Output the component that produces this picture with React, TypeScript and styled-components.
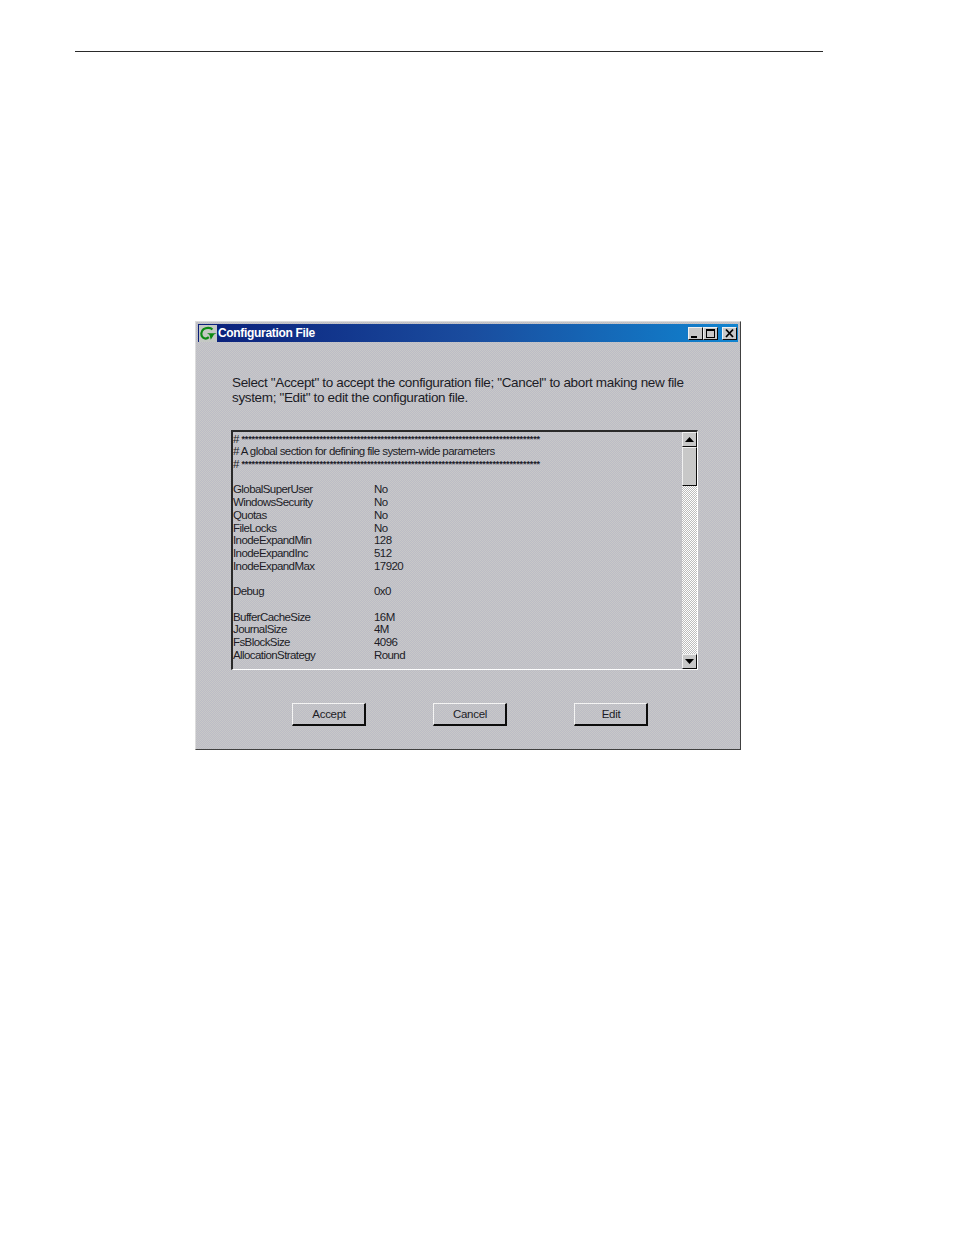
import React from 'react';
import styled, { createGlobalStyle } from 'styled-components';

const Colors = {
    face: '#c8c8c8',
    dither: '#bcbcc6',
    dark: '#0c0c0c',
    ink: '#1c1c26',
    rule: '#2a2a2a',
};

const GlobalStyle = createGlobalStyle`
    html, body {
        margin: 0;
        padding: 0;
        background: #fff;
    }
    body {
        font-family: "Liberation Sans", Arial, sans-serif;
    }
`;

const Page = styled.div`
    width: 954px;
    height: 1235px;
    padding-top: 51px;
    box-sizing: border-box;
    overflow: hidden;
`;

const HeaderRule = styled.div`
    width: 748px;
    height: 1px;
    margin-left: 75px;
    background: ${Colors.rule};
`;

const Window = styled.div`
    width: 546px;
    height: 429px;
    margin: 269px 0 0 195px;
    box-sizing: border-box;
    padding: 2px;
    display: flex;
    flex-direction: column;
    border: 1px solid;
    border-color: #dcdcdc #404040 #404040 #dcdcdc;
    background-color: ${Colors.face};
    background-image: conic-gradient(${Colors.dither} 25%, transparent 0 50%, ${Colors.dither} 0 75%, transparent 0);
    background-size: 2px 2px;
`;

const TitleBar = styled.div`
    height: 18px;
    flex: none;
    display: flex;
    align-items: center;
    padding-left: 1px;
    background: linear-gradient(90deg, #0a1f7a 0%, #1a4c9e 50%, #1084d0 100%);
`;

const AppIcon = styled.svg`
    width: 18px;
    height: 17px;
    flex: none;
`;

const Title = styled.div`
    flex: 1;
    margin-left: 1px;
    color: #fff;
    font-size: 12px;
    font-weight: 700;
    letter-spacing: -0.32px;
`;

const CaptionButton = styled.div<{ $gap?: number }>`
    width: 15px;
    height: 13px;
    box-sizing: border-box;
    margin-left: ${p => p.$gap ?? 0}px;
    border: 1px solid;
    border-color: #f0f0f0 ${Colors.dark} ${Colors.dark} #f0f0f0;
    background: ${Colors.face};
    display: flex;
    align-items: center;
    justify-content: center;
    svg {
        display: block;
    }
`;

const CaptionGroup = styled.div`
    display: flex;
    margin-right: 1px;
`;

const Body = styled.div`
    flex: 1;
    display: flex;
    flex-direction: column;
    padding: 33px 40px 0 34px;
`;

const Prompt = styled.p`
    margin: 0;
    width: 470px;
    color: ${Colors.ink};
    font-size: 13.5px;
    line-height: 15px;
    letter-spacing: -0.35px;
`;

const ListBox = styled.div`
    width: 467px;
    height: 240px;
    margin: 25px 0 0 -1px;
    box-sizing: border-box;
    display: flex;
    border-style: solid;
    border-width: 2px 1px 1px 2px;
    border-color: ${Colors.rule} #fff #fff ${Colors.rule};
`;

const ListText = styled.div`
    flex: 1;
    min-width: 0;
    padding-top: 0.6px;
    overflow: hidden;
    color: ${Colors.ink};
    font-size: 11.5px;
    letter-spacing: -0.58px;
`;

const Line = styled.div`
    display: flex;
    height: 12.72px;
    line-height: 12.72px;
    white-space: pre;
`;

const Key = styled.span`
    width: 141px;
    flex: none;
`;

const Stars = styled.span`
    color: #20202a;
    font-size: 9px;
    font-weight: 700;
    letter-spacing: -0.11px;
`;

const ScrollBar = styled.div`
    width: 15px;
    flex: none;
    display: flex;
    flex-direction: column;
`;

const ScrollButton = styled.div`
    width: 15px;
    height: 15px;
    flex: none;
    box-sizing: border-box;
    border: 1px solid;
    border-color: #f0f0f0 ${Colors.dark} ${Colors.dark} #f0f0f0;
    background: ${Colors.face};
    display: flex;
    align-items: center;
    justify-content: center;
`;

const Thumb = styled.div`
    height: 39px;
    flex: none;
    box-sizing: border-box;
    border: 1px solid;
    border-color: #f0f0f0 ${Colors.dark} ${Colors.dark} #f0f0f0;
    background: ${Colors.face};
`;

const Track = styled.div`
    flex: 1;
    background-color: #fff;
    background-image: conic-gradient(#bcbcbc 25%, transparent 0 50%, #bcbcbc 0 75%, transparent 0);
    background-size: 2px 2px;
`;

const ButtonRow = styled.div`
    display: flex;
    gap: 67px;
    margin: 33px 0 0 60px;
`;

const PushButton = styled.div`
    width: 74px;
    height: 23px;
    box-sizing: border-box;
    padding-left: 1px;
    border: 1px solid;
    border-width: 1px 2px 2px 1px;
    border-color: #f4f4f4 ${Colors.dark} ${Colors.dark} #f4f4f4;
    display: flex;
    align-items: center;
    justify-content: center;
    color: ${Colors.ink};
    font-size: 11.5px;
    letter-spacing: -0.3px;
`;

const settings: [string, string][] = [
    ['GlobalSuperUser', 'No'],
    ['WindowsSecurity', 'No'],
    ['Quotas', 'No'],
    ['FileLocks', 'No'],
    ['InodeExpandMin', '128'],
    ['InodeExpandInc', '512'],
    ['InodeExpandMax', '17920'],
    ['', ''],
    ['Debug', '0x0'],
    ['', ''],
    ['BufferCacheSize', '16M'],
    ['JournalSize', '4M'],
    ['FsBlockSize', '4096'],
    ['AllocationStrategy', 'Round'],
];

const STARS = '*'.repeat(88);

const App = (): JSX.Element => (
    <Page>
        <GlobalStyle />
        <HeaderRule />
        <Window>
            <TitleBar>
                <AppIcon viewBox="0 0 18 17">
                    <rect width="18" height="17" fill="#c4c8c4" />
                    <path d="M13.4 4.4C11.6 2.4 7.4 2.2 4.6 4.2 1.8 6.4 1.6 10.6 3.8 12.4c1.8 1.4 4.4 1.2 6-.2" fill="none" stroke="#0c8a14" strokeWidth="2.2" />
                    <path d="M8 8.2h9.6l-2.6 1.4-3.2 5.2-1.4-5z" fill="#0c8a14" />
                </AppIcon>
                <Title>Configuration File</Title>
                <CaptionGroup>
                    <CaptionButton>
                        <svg width="13" height="11" viewBox="0 0 13 11">
                            <rect x="2" y="8" width="6" height="2" fill="#000" />
                        </svg>
                    </CaptionButton>
                    <CaptionButton>
                        <svg width="13" height="11" viewBox="0 0 13 11">
                            <path d="M2 1h9v9H2zM3 3v6h7V3z" fill="#000" fillRule="evenodd" />
                        </svg>
                    </CaptionButton>
                    <CaptionButton $gap={4}>
                        <svg width="13" height="11" viewBox="0 0 13 11">
                            <path d="M3 1.5l7 7.5M10 1.5L3 9" stroke="#000" strokeWidth="1.8" fill="none" />
                        </svg>
                    </CaptionButton>
                </CaptionGroup>
            </TitleBar>
            <Body>
                <Prompt>
                    Select "Accept" to accept the configuration file; "Cancel" to abort making new file
                    <br />
                    system; "Edit" to edit the configuration file.
                </Prompt>
                <ListBox>
                    <ListText>
                        <Line># <Stars>{STARS}</Stars></Line>
                        <Line># A global section for defining file system-wide parameters</Line>
                        <Line># <Stars>{STARS}</Stars></Line>
                        <Line> </Line>
                        {settings.map(([key, value], i) => (
                            <Line key={i}>
                                <Key>{key}</Key>
                                <span>{value}</span>
                            </Line>
                        ))}
                    </ListText>
                    <ScrollBar>
                        <ScrollButton>
                            <svg width="9" height="5" viewBox="0 0 9 5">
                                <path d="M4.5 0L9 5H0z" fill="#000" />
                            </svg>
                        </ScrollButton>
                        <Thumb />
                        <Track />
                        <ScrollButton>
                            <svg width="9" height="5" viewBox="0 0 9 5">
                                <path d="M0 0h9L4.5 5z" fill="#000" />
                            </svg>
                        </ScrollButton>
                    </ScrollBar>
                </ListBox>
                <ButtonRow>
                    <PushButton>Accept</PushButton>
                    <PushButton>Cancel</PushButton>
                    <PushButton>Edit</PushButton>
                </ButtonRow>
            </Body>
        </Window>
    </Page>
);

export default App;
